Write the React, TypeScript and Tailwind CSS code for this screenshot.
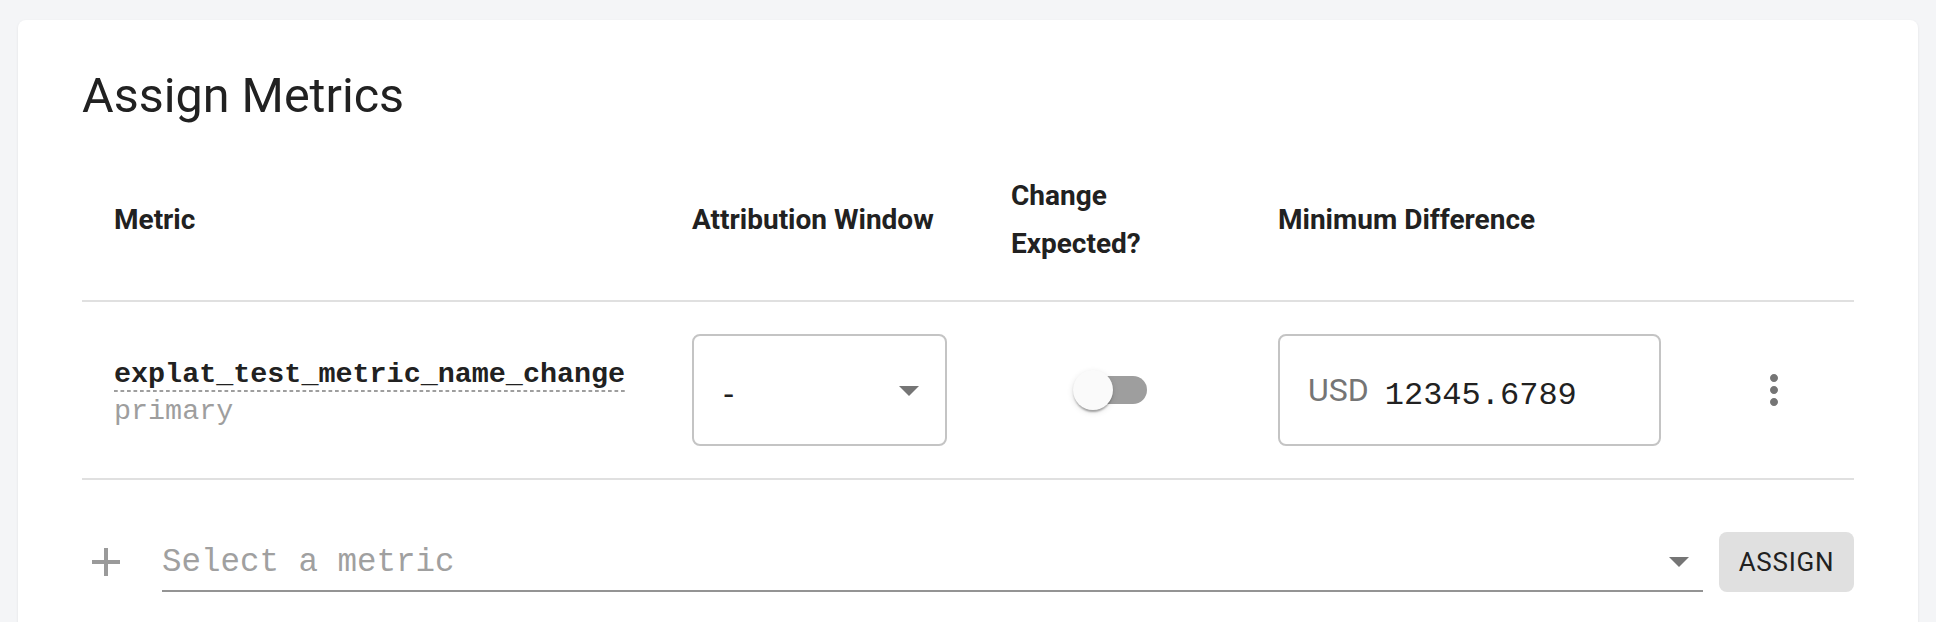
import React from "react";

const mono = "font-['Liberation_Mono',monospace]";
const cols = "grid grid-cols-[578px_319px_267px_447px_1fr]";

const ArrowDropDown = () => (
  <svg width="48" height="48" viewBox="0 0 24 24" className="shrink-0 fill-[#757575]">
    <path d="M7 10l5 5 5-5z" />
  </svg>
);

const MoreVert = () => (
  <svg width="48" height="48" viewBox="0 0 24 24" className="fill-[#757575]">
    <path d="M12 8c1.1 0 2-.9 2-2s-.9-2-2-2-2 .9-2 2 .9 2 2 2zm0 2c-1.1 0-2 .9-2 2s.9 2 2 2 2-.9 2-2-.9-2-2-2zm0 6c-1.1 0-2 .9-2 2s.9 2 2 2 2-.9 2-2-.9-2-2-2z" />
  </svg>
);

const AddIcon = () => (
  <svg width="48" height="48" viewBox="0 0 24 24" className="shrink-0 fill-[#9a9a9a]">
    <path d="M19 13h-6v6h-2v-6H5v-2h6V5h2v6h6v2z" />
  </svg>
);

// unchecked switch, drawn at the page's 2x scale
const Switch = () => (
  <div className="relative h-[76px] w-[116px]">
    <div className="absolute left-[24px] top-[24px] h-[28px] w-[68px] rounded-full bg-[#9e9e9e]" />
    <div className="absolute left-[18px] top-[18px] h-[40px] w-[40px] rounded-full bg-[#fafafa] shadow-[0_4px_2px_-2px_rgba(0,0,0,0.2),0_2px_2px_0_rgba(0,0,0,0.14),0_2px_6px_0_rgba(0,0,0,0.12)]" />
  </div>
);

const HeaderRow = () => (
  <div className={`${cols} border-b-2 border-[#e0e0e0] text-[28px] font-bold leading-[48px]`}>
    <div className="flex items-center p-8">Metric</div>
    <div className="flex items-center whitespace-nowrap p-8">Attribution Window</div>
    <div className="flex flex-col justify-center p-8">
      <span>Change</span>
      <span>Expected?</span>
    </div>
    <div className="flex items-center whitespace-nowrap p-8">Minimum Difference</div>
    <div className="p-8" />
  </div>
);

const MetricRow = () => (
  <div className={`${cols} border-b-2 border-[#e0e0e0]`}>
    <div className="flex items-center p-8">
      <div className="pt-[5px]">
        <div className="inline-block">
          <div className={`${mono} text-[28.4px] font-bold leading-[31px] text-[#212121]`}>
            explat_test_metric_name_change
          </div>
          <div className="h-[2px] bg-[linear-gradient(to_right,#9e9e9e_4px,transparent_4px)] bg-[length:6.5px_2px] bg-repeat-x" />
        </div>
        <div className={`${mono} mt-[5px] text-[28.4px] leading-[30px] text-[#9e9e9e]`}>primary</div>
      </div>
    </div>

    <div className="flex items-center p-8">
      <div className="flex h-[112px] w-full items-center justify-between rounded-lg border-2 border-[#c4c4c4] pl-[28px] pr-[12px]">
        <span className="-ml-[3px] pt-[8px] font-['DejaVu_Sans_Mono',monospace] text-[32px] text-[#212121]">-</span>
        <ArrowDropDown />
      </div>
    </div>

    <div className="flex items-center justify-center p-8">
      <Switch />
    </div>

    <div className="flex items-center p-8">
      <div className="flex h-[112px] w-full items-center rounded-lg border-2 border-[#c4c4c4] px-[28px]">
        <span className="mr-4 text-[32px] text-[#757575]">USD</span>
        <span className={`${mono} pt-[11px] text-[32px] text-[#212121]`}>12345.6789</span>
      </div>
    </div>

    <div className="flex items-center justify-center p-8">
      <MoreVert />
    </div>
  </div>
);

const AssignRow = () => (
  <div className="mt-[52px] flex items-center">
    <AddIcon />
    <div className="ml-8 flex h-[60px] flex-1 items-center justify-between border-b-2 border-[#949494]">
      <span className={`${mono} pt-[5px] text-[32.5px] text-[#a0a0a0]`}>Select a metric</span>
      <ArrowDropDown />
    </div>
    <button className="ml-4 h-[60px] w-[135px] rounded-lg bg-[#e0e0e0] text-[26px] tracking-[0.75px] text-[#212121]">
      ASSIGN
    </button>
  </div>
);

export default function App() {
  return (
    <div className="min-h-screen bg-[#f4f5f7] px-[18px] pt-5 font-['Roboto',sans-serif] text-[#212121]">
      <div className="rounded-lg bg-white px-16 pb-16 pt-[44px] shadow-[0_1px_3px_rgba(0,0,0,0.08)]">
        <h1 className="mb-3 text-[48.5px] font-normal leading-[64px]">Assign Metrics</h1>
        <HeaderRow />
        <MetricRow />
        <AssignRow />
      </div>
    </div>
  );
}
